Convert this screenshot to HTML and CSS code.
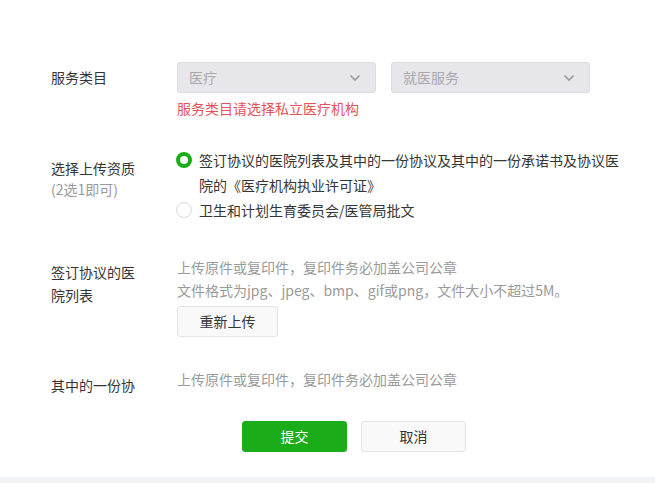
FILE: index.html
```html
<!DOCTYPE html>
<html lang="zh">
<head>
<meta charset="utf-8">
<link rel="stylesheet" href="styles.css">
</head>
<body>
<div class="page">
  <div class="scroll">
    <div class="row row-service">
      <div class="label label-mid">服务类目</div>
      <div class="content">
        <div class="selects">
          <div class="select"><span>医疗</span><svg class="chev" width="12" height="8" viewBox="0 0 12 8"><path d="M1.5 1.5 L6 6 L10.5 1.5" fill="none" stroke="#9a9a9a" stroke-width="1.6"/></svg></div>
          <div class="select"><span>就医服务</span><svg class="chev" width="12" height="8" viewBox="0 0 12 8"><path d="M1.5 1.5 L6 6 L10.5 1.5" fill="none" stroke="#9a9a9a" stroke-width="1.6"/></svg></div>
        </div>
        <div class="error">服务类目请选择私立医疗机构</div>
      </div>
    </div>

    <div class="row row-qual">
      <div class="label label-qual">选择上传资质<br><span class="sub">(2选1即可)</span></div>
      <div class="content">
        <div class="radio-item">
          <span class="radio checked"></span>
          <span class="radio-text">签订协议的医院列表及其中的一份协议及其中的一份承诺书及协议医院的《医疗机构执业许可证》</span>
        </div>
        <div class="radio-item">
          <span class="radio"></span>
          <span class="radio-text">卫生和计划生育委员会/医管局批文</span>
        </div>
      </div>
    </div>

    <div class="row row-list">
      <div class="label label-list">签订协议的医<br>院列表</div>
      <div class="content">
        <div class="hint">上传原件或复印件，复印件务必加盖公司公章<br>文件格式为jpg、jpeg、bmp、gif或png，文件大小不超过5M。</div>
        <button class="btn btn-default btn-upload">重新上传</button>
      </div>
    </div>

    <div class="row row-agree">
      <div class="label label-agree">其中的一份协</div>
      <div class="content">
        <div class="hint">上传原件或复印件，复印件务必加盖公司公章</div>
      </div>
    </div>
  </div>

  <div class="footer">
    <button class="btn btn-primary">提交</button>
    <button class="btn btn-default">取消</button>
  </div>
  <div class="strip"></div>
</div>
</body>
</html>
```

FILE: styles.css
```css
* { box-sizing: border-box; }
html, body {
  margin: 0;
  padding: 0;
  background: #ffffff;
}
body {
  font-family: "Noto Sans CJK SC", "Microsoft YaHei", sans-serif;
  font-size: 14px;
  color: #353535;
  width: 655px;
  height: 483px;
  overflow: hidden;
}
.page {
  display: flex;
  flex-direction: column;
  height: 483px;
}
.scroll {
  height: 393px;
  overflow: hidden;
  padding-top: 62px;
  flex: none;
}
.row {
  display: flex;
  padding-left: 51px;
}
.label {
  width: 126px;
  flex: none;
  color: #353535;
}
.content {
  flex: none;
}
.label-mid {
  line-height: 31px;
}
.selects {
  display: flex;
  gap: 15px;
}
.select {
  width: 199px;
  height: 31px;
  background: #e7e7eb;
  border: 1px solid #dcdce0;
  border-radius: 3px;
  display: flex;
  align-items: center;
  justify-content: space-between;
  padding: 0 14px 0 11px;
  color: #a9a9ad;
  line-height: 29px;
}
.chev { display: block; }
.error {
  color: #e4525a;
  line-height: 20px;
  margin-top: 5px;
}
.row-qual {
  margin-top: 30px;
}
.label-qual {
  padding-top: 10px;
  line-height: 21px;
}
.sub { color: #9a9a9a; }
.radio-item {
  display: flex;
  align-items: flex-start;
  width: 450px;
}
.radio {
  flex: none;
  width: 16px;
  height: 16px;
  border-radius: 50%;
  border: 1px solid #d9d9d9;
  background: #fff;
  margin: 4px 7px 0 -1px;
}
.radio.checked {
  border: 4px solid #1aad19;
}
.radio-text {
  line-height: 25px;
  width: 426px;
}
.row-list {
  margin-top: 33px;
}
.label-list {
  padding-top: 5px;
  line-height: 23px;
}
.hint {
  color: #9a9a9a;
  line-height: 23px;
}
.btn {
  font-family: inherit;
  font-size: 14px;
  height: 31px;
  width: 105px;
  border-radius: 3px;
  padding: 0;
  line-height: 29px;
  cursor: pointer;
}
.btn-default {
  background: #f9f9f9;
  border: 1px solid #e4e4e6;
  color: #353535;
}
.btn-upload {
  display: block;
  width: 101px;
  margin-top: 4px;
}
.btn-primary {
  background: #1aad19;
  border: 1px solid #1aad19;
  color: #ffffff;
}
.row-agree {
  margin-top: 31px;
}
.label-agree {
  padding-top: 6px;
  line-height: 23px;
}
.footer {
  height: 84px;
  display: flex;
  gap: 14px;
  padding-left: 242px;
  padding-top: 28px;
  flex: none;
}
.strip {
  flex: 1;
  background: #f2f3f5;
}
```
